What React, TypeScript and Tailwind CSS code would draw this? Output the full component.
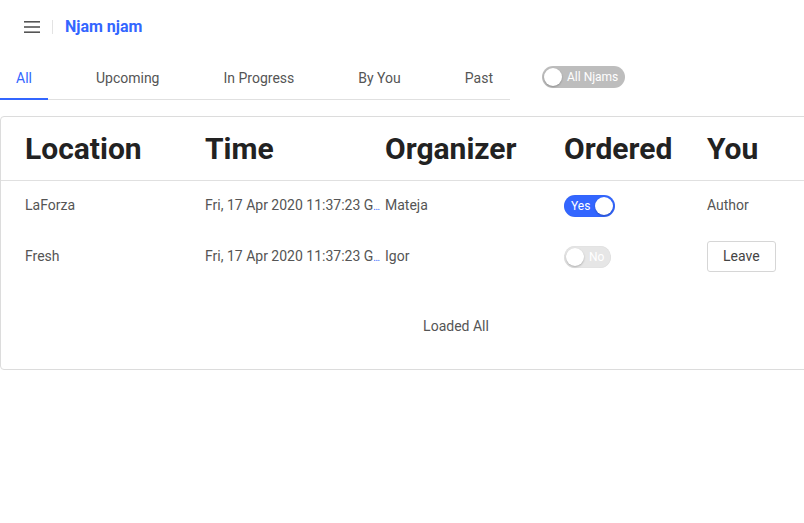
import { useState } from "react";

const tabs = ["All", "Upcoming", "In Progress", "By You", "Past"];

const rows = [
  { location: "LaForza", time: "Fri, 17 Apr 2020 11:37:23 G", organizer: "Mateja", ordered: true, you: "author" },
  { location: "Fresh", time: "Fri, 17 Apr 2020 11:37:23 G", organizer: "Igor", ordered: false, you: "leave" },
];

function Toggle({ on, label }: { on: boolean; label: string }) {
  return (
    <div
      className={`flex items-center h-[22px] rounded-full px-[2px] shadow-[inset_0_0_1px_rgba(0,0,0,0.15)] ${
        on ? "bg-[#3366ff] flex-row-reverse" : "bg-[#e6e6e6] flex-row"
      }`}
    >
      <div className="w-[18px] h-[18px] rounded-full bg-white shadow-[0_1px_2px_rgba(0,0,0,0.25)]" />
      <span className="text-[12px] text-white px-[5px] leading-none">{label}</span>
    </div>
  );
}

export default function App() {
  const [active] = useState(0);

  return (
    <div className="w-[804px] h-[523px] overflow-hidden bg-white font-['Roboto',sans-serif]">
      {/* Top bar */}
      <div className="flex items-center h-[56px] pl-[24px] pb-[2px]">
        <svg width="16" height="14" viewBox="0 0 16 14" className="text-[#555]">
          <rect x="0" y="1" width="16" height="1.6" fill="currentColor" />
          <rect x="0" y="6.2" width="16" height="1.6" fill="currentColor" />
          <rect x="0" y="11.4" width="16" height="1.6" fill="currentColor" />
        </svg>
        <div className="w-px h-[14px] bg-[#e3e3e3] ml-[12px] mr-[12px]" />
        <span className="text-[16px] font-bold text-[#3366ff]">Njam njam</span>
      </div>

      {/* Tabs row */}
      <div className="flex items-start">
        <div className="flex gap-8 border-b border-[#e0e0e0] w-[510px]">
          {tabs.map((t, i) => (
            <div
              key={t}
              className={`px-4 pt-[2px] h-[44px] flex items-center text-[14px] border-b-2 -mb-px ${
                i === active ? "text-[#3366ff] border-[#3366ff]" : "text-[#555] border-transparent"
              }`}
            >
              {t}
            </div>
          ))}
        </div>
        <div className="ml-[32px] mt-[10px] w-[83px]">
          <div className="flex items-center h-[22px] rounded-full px-[2px] bg-[#bdbdbd]">
            <div className="w-[18px] h-[18px] rounded-full bg-white shadow-[0_1px_2px_rgba(0,0,0,0.25)]" />
            <span className="text-[12px] text-white pl-[5px] leading-none">All Njams</span>
          </div>
        </div>
      </div>

      {/* Card */}
      <div className="mt-[16px] w-[912px] border border-[#dcdcdc] rounded-[4px]">
        <div className="flex items-center h-[64px] pl-[24px] border-b border-[#e0e0e0] text-[30px] font-bold text-[#222]">
          <div className="w-[180px]">Location</div>
          <div className="w-[180px]">Time</div>
          <div className="w-[179px]">Organizer</div>
          <div className="w-[143px]">Ordered</div>
          <div>You</div>
        </div>
        <div>
          {rows.map((r) => (
            <div key={r.location} className="flex items-center h-[51px] pb-[2px] pl-[24px] text-[14px] text-[#555]">
              <div className="w-[180px]">{r.location}</div>
              <div className="w-[180px] whitespace-nowrap overflow-hidden">
                {r.time}
                <span className="text-[#3366ff] text-[10px]">…</span>
              </div>
              <div className="w-[179px]">{r.organizer}</div>
              <div className="w-[143px] flex">
                <Toggle on={r.ordered} label={r.ordered ? "Yes" : "No"} />
              </div>
              <div>
                {r.you === "author" ? (
                  "Author"
                ) : (
                  <button className="h-[31px] px-[15px] border border-[#d6d6d6] rounded-[3px] text-[#444] bg-white">
                    Leave
                  </button>
                )}
              </div>
            </div>
          ))}
        </div>
        <div className="flex justify-center pt-[33px] pb-[32px] text-[14px] text-[#555]">Loaded All</div>
      </div>
    </div>
  );
}
